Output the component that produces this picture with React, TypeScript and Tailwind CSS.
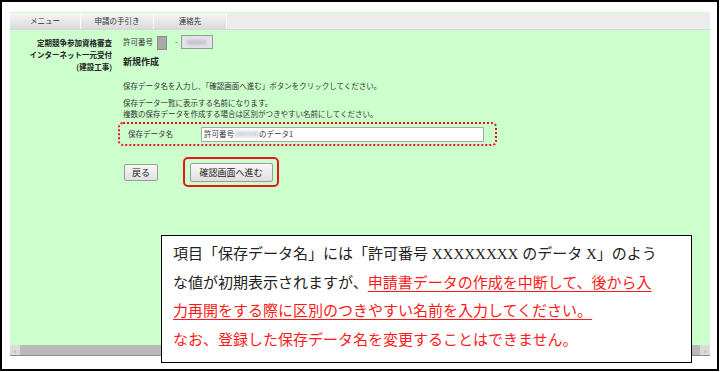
import React from "react";

const ui = { fontFamily: '"Noto Sans CJK JP", "Noto Sans", sans-serif' };
const serif = { fontFamily: '"Liberation Serif", "Noto Sans CJK JP", serif' };

const tabs = [
	{ label: "メニュー", w: "w-[71px]" },
	{ label: "申請の手引き", w: "w-[73px]" },
	{ label: "連絡先", w: "w-[73px]" },
];

function Blur({ w, dark }: { w: string; dark?: boolean }) {
	return (
		<span
			className={`${w} h-[14px] inline-flex items-center justify-center border ${
				dark ? "border-[#8a8a8a] bg-[#a9a9ab]" : "border-[#9a9a9a] bg-[#e2e2e8]"
			}`}
		>
			<span className="blur-[1px] text-[7px] text-[#8c8c9c]">
				{dark ? "" : "00000"}
			</span>
		</span>
	);
}

export default function App() {
	return (
		<div className="w-[720px] h-[372px] bg-white">
			<div className="w-[719px] h-[371px] border-2 border-black pl-[8px] pt-[10px]">
				<div className="relative w-[700px] bg-[#ccffcc]" style={ui}>
					{/* tab bar */}
					<div className="pt-[1px]">
						<div className="flex h-[17px] bg-[#ececec] border-b border-[#d6d6d6]">
							{tabs.map((t) => (
								<div
									key={t.label}
									className={`${t.w} h-full flex items-center justify-center border-r border-white bg-gradient-to-b from-[#f6f6f6] to-[#dadada] text-[7.5px] text-[#333]`}
								>
									{t.label}
								</div>
							))}
						</div>
					</div>

					{/* content */}
					<div className="h-[315px] flex text-[#333]">
						<div className="w-[102px] pt-[7px] text-right text-[7.5px] font-bold leading-[12px] text-[#222]">
							<div>定期競争参加資格審査</div>
							<div>インターネット一元受付</div>
							<div>(建設工事)</div>
						</div>
						<div className="ml-[11px] flex flex-col">
							<div className="mt-[5px] h-[14px] flex items-center text-[7.5px]">
								<span>許可番号</span>
								<span className="ml-[4px]">
									<Blur w="w-[10px]" dark />
								</span>
								<span className="ml-[8px] mr-[3px]">-</span>
								<Blur w="w-[32px]" />
							</div>
							<div className="mt-[7px] text-[9px] font-bold leading-[12px] text-[#222]">
								新規作成
							</div>
							<div className="mt-[12px] text-[7.5px] leading-[11px]">
								保存データ名を入力し、「確認画面へ進む」ボタンをクリックしてください。
							</div>
							<div className="mt-[6px] text-[7.5px] leading-[11px]">
								<div>保存データ一覧に表示する名前になります。</div>
								<div>複数の保存データを作成する場合は区別がつきやすい名前にしてください。</div>
							</div>
							<div className="mt-[3px] -ml-[5px] w-[379px] h-[24px] border-2 border-dotted border-[#e8141e] rounded-[5px] flex items-center pl-[8px] text-[7.5px]">
								<span className="w-[73px]">保存データ名</span>
								<div className="w-[283px] h-[15px] bg-white border border-[#a8a8a8] flex items-center px-[2px]">
									<span>許可番号</span>
									<span className="blur-[1px] text-[#8a94b4]">000000</span>
									<span>のデータ1</span>
								</div>
							</div>
							<div className="mt-[11px] flex items-center">
								<button className="ml-[1px] w-[34px] h-[17px] border border-[#9a9a9a] rounded-[2px] bg-gradient-to-b from-[#f8f8f8] to-[#e0e0e0] text-[9px] leading-none text-[#222]">
									戻る
								</button>
								<div className="ml-[25px] w-[96px] h-[30px] border-2 border-[#e8141e] rounded-[5px] flex items-center justify-center">
									<button className="w-[83px] h-[19px] border border-[#9a9a9a] rounded-[2px] bg-gradient-to-b from-[#f8f8f8] to-[#e0e0e0] text-[9px] leading-none text-[#222]">
										確認画面へ進む
									</button>
								</div>
							</div>
						</div>
					</div>

					{/* horizontal scrollbar */}
					<div className="h-[11px] flex bg-[#b9b9b9] border-b border-[#8c8c8c]">
						<div className="w-[10px] h-full bg-[#dadada] flex items-center justify-center text-[7px] text-[#888] leading-none">
							‹
						</div>
						<div className="flex-1" />
						<div className="w-[10px] h-full bg-[#dadada] flex items-center justify-center text-[7px] text-[#888] leading-none">
							›
						</div>
					</div>

					{/* callout */}
					<div
						className="absolute left-[151px] top-[223px] w-[531px] h-[128px] bg-white border border-black pl-[11px] pt-[4px] text-[15px] leading-[28.5px] text-[#222] whitespace-nowrap"
						style={serif}
					>
						<div>項目「保存データ名」には「許可番号 XXXXXXXX のデータ X」のよう</div>
						<div>
							な値が初期表示されますが、
							<span className="text-[#ff1a1a] underline decoration-[#ff1a1a] underline-offset-[3px]">
								申請書データの作成を中断して、後から入
							</span>
						</div>
						<div>
							<span className="text-[#ff1a1a] underline decoration-[#ff1a1a] underline-offset-[3px]">
								力再開をする際に区別のつきやすい名前を入力してください。
							</span>
						</div>
						<div className="text-[#ff1a1a]">なお、登録した保存データ名を変更することはできません。</div>
					</div>
				</div>
			</div>
		</div>
	);
}
